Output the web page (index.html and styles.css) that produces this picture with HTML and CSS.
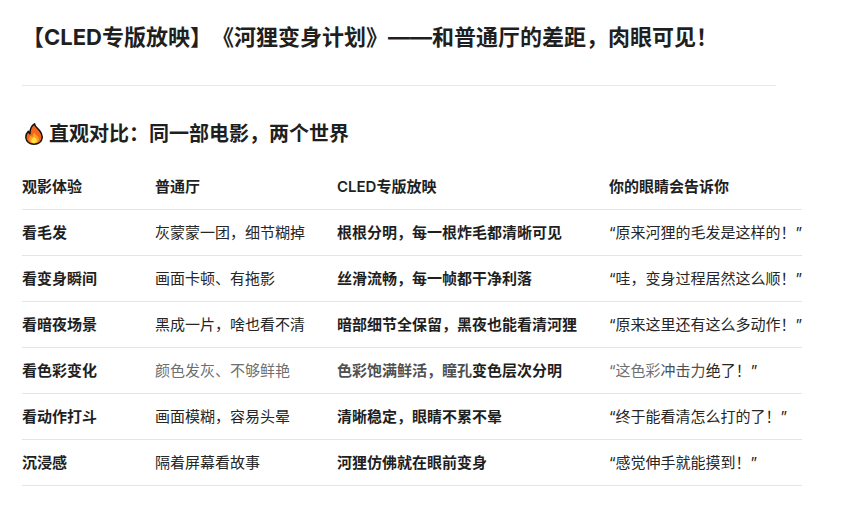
FILE: index.html
```html
<!DOCTYPE html>
<html lang="zh-CN">
<head>
<meta charset="utf-8">
<title>CLED专版放映</title>
<link rel="stylesheet" href="styles.css">
</head>
<body>
<main class="article">
  <h1 class="title">【CLED专版放映】《河狸变身计划》——和普通厅的差距，肉眼可见！</h1>
  <hr class="rule">
  <h2 class="section"><svg class="flame" viewBox="0 0 18 22" width="18" height="22" aria-hidden="true"><path d="M9.5 0.8C10 3.8 12 4.6 14.5 7.5C16.8 10.2 17.4 12.6 17.2 14.8C16.8 18.8 13.4 21.2 9 21.2C4.6 21.2 1.2 18.6 0.9 14.8C0.7 12.2 1.8 9.8 3.3 8.3C3.6 9.5 4.1 10.3 5 10.7C4.8 6.8 6.6 2.8 9.5 0.8Z" fill="#f4661b" stroke="#111" stroke-width="1.5" stroke-linejoin="round"/><path d="M9.6 9.5C10.2 12 14 13.2 14 16.4C14 18.8 11.8 20.2 9 20.2C6.2 20.2 4 18.8 4 16.3C4 14.6 5 13.4 6.1 12.6C6.4 13.4 6.8 13.8 7.5 14C7.4 12.2 8.3 10.5 9.6 9.5Z" fill="#fb9f1e"/><path d="M9.2 13.6C9.8 15 11.8 15.8 11.8 17.6C11.8 19.2 10.6 20.2 9 20.2C7.4 20.2 6.2 19.2 6.2 17.7C6.2 16 8.4 15.2 9.2 13.6Z" fill="#fde047"/></svg>直观对比：同一部电影，两个世界</h2>
  <table class="compare">
    <thead>
      <tr><th class="c1">观影体验</th><th class="c2">普通厅</th><th class="c3">CLED专版放映</th><th class="c4">你的眼睛会告诉你</th></tr>
    </thead>
    <tbody>
      <tr><td class="strong">看毛发</td><td>灰蒙蒙一团，细节糊掉</td><td class="strong">根根分明，每一根炸毛都清晰可见</td><td>“原来河狸的毛发是这样的！”</td></tr>
      <tr><td class="strong">看变身瞬间</td><td>画面卡顿、有拖影</td><td class="strong">丝滑流畅，每一帧都干净利落</td><td>“哇，变身过程居然这么顺！”</td></tr>
      <tr><td class="strong">看暗夜场景</td><td>黑成一片，啥也看不清</td><td class="strong">暗部细节全保留，黑夜也能看清河狸</td><td>“原来这里还有这么多动作！”</td></tr>
      <tr><td class="strong">看色彩变化</td><td class="dim">颜色发灰、不够鲜艳</td><td class="strong"><span class="soft">色彩饱满鲜活，瞳孔</span>变色层次分明</td><td><span class="dim">“这色彩</span><span class="soft">冲击力</span>绝了！”</td></tr>
      <tr><td class="strong">看动作打斗</td><td>画面模糊，容易头晕</td><td class="strong">清晰稳定，眼睛不累不晕</td><td>“终于能看清怎么打的了！”</td></tr>
      <tr><td class="strong">沉浸感</td><td>隔着屏幕看故事</td><td class="strong">河狸仿佛就在眼前变身</td><td>“感觉伸手就能摸到！”</td></tr>
    </tbody>
  </table>
</main>
</body>
</html>
```
FILE: styles.css
```css
* { box-sizing: border-box; }
html, body { margin: 0; padding: 0; background: #fff; }
body {
  font-family: Inter, "Noto Sans CJK SC", sans-serif;
  color: #1f1f1f;
  overflow: hidden;
  text-spacing-trim: space-all;
  font-feature-settings: "chws" 0, "palt" 0;
}
.article { width: 776px; padding: 22px 0 0 22px; }
.title {
  margin: 0;
  font-size: 22px;
  line-height: 30px;
  font-weight: 700;
  padding-bottom: 33px;
}
.rule { margin: 0; border: 0; border-top: 1px solid #e8e8e8; }
.section {
  margin: 34px 0 0;
  padding-left: 3px;
  font-size: 20px;
  line-height: 28px;
  font-weight: 700;
  display: flex;
  align-items: center;
  gap: 6px;
}
.flame { flex: none; }
.compare {
  margin-top: 16px;
  width: 780px;
  border-collapse: collapse;
  table-layout: fixed;
  font-size: 15px;
  line-height: 21px;
}
.compare th, .compare td {
  padding: 12px 0;
  text-align: left;
  border-bottom: 1px solid #e5e5e5;
  white-space: nowrap;
}
.compare th { font-weight: 600; }
.compare td { font-weight: 400; color: #262626; }
.compare td.strong { font-weight: 600; color: #1f1f1f; }
.compare .dim { color: #6f6f6f; }
.compare .soft { color: #505050; }
.c1 { width: 133px; }
.c2 { width: 182px; }
.c3 { width: 272px; }
.c4 { width: 193px; }
```
